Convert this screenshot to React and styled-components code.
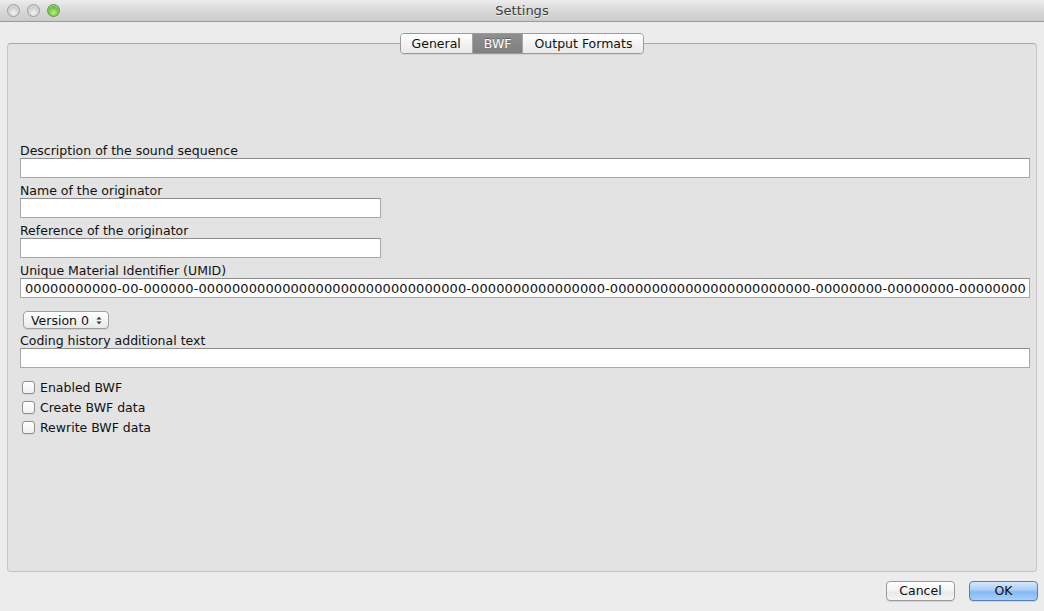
import React from 'react'
import styled, { createGlobalStyle } from 'styled-components'

const GlobalStyle = createGlobalStyle`
  html, body {
    margin: 0;
    padding: 0;
    background: #ececec;
  }
  body {
    font-family: "DejaVu Sans", "Liberation Sans", sans-serif;
    font-size: 12.5px;
    color: #111;
  }
`

const Window = styled.div`
  width: 1044px;
  height: 611px;
  display: flex;
  flex-direction: column;
  background: #ececec;
  overflow: hidden;
  border-radius: 5px 5px 4px 4px;
`

const TitleBar = styled.div`
  height: 21px;
  flex: none;
  display: flex;
  align-items: center;
  position: relative;
  background: linear-gradient(#ececec, #d6d6d6 60%, #cbcbcb);
  border-bottom: 1px solid #9a9a9a;
`

const Lights = styled.div`
  display: flex;
  gap: 7px;
  padding-left: 7px;
`

const Light = styled.span`
  width: 13px;
  height: 13px;
  border-radius: 50%;
  box-sizing: border-box;
  border: 1px solid ${p => (p.green ? '#5e9a3e' : '#9c9c9c')};
  background: ${p =>
    p.green
      ? 'radial-gradient(circle at 50% 70%, #b8f08c 0%, #6cc33a 55%, #3f8f1e 100%)'
      : 'radial-gradient(circle at 50% 70%, #f4f4f4 0%, #cfcfcf 55%, #a9a9a9 100%)'};
  box-shadow: inset 0 1px 1px rgba(255, 255, 255, 0.6);
`

const Title = styled.div`
  position: absolute;
  left: 0;
  right: 0;
  text-align: center;
  font-size: 13px;
  color: #3c3c3c;
  text-shadow: 0 1px 0 rgba(255, 255, 255, 0.6);
  pointer-events: none;
`

const Body = styled.div`
  flex: 1;
  display: flex;
  flex-direction: column;
  padding: 21px 7px 10px 7px;
`

const TabBox = styled.div`
  position: relative;
  flex: 1;
  background: #e3e3e3;
  border: 1px solid #c4c4c4;
  border-top-color: #a9a9a9;
  border-radius: 4px;
  padding: 96px 6px 0 12px;
`

const TabBar = styled.div`
  position: absolute;
  top: -11px;
  left: 0;
  right: 0;
  display: flex;
  justify-content: center;
`

const TabGroup = styled.div`
  display: flex;
  border: 1px solid #9b9b9b;
  border-radius: 4px;
  overflow: hidden;
  box-shadow: 0 1px 0 rgba(0, 0, 0, 0.08);
`

const Tab = styled.div`
  height: 19px;
  line-height: 19px;
  padding: 0 11px;
  color: ${p => (p.active ? '#fff' : '#111')};
  text-shadow: ${p => (p.active ? '0 -1px 0 rgba(0,0,0,0.35)' : 'none')};
  background: ${p =>
    p.active
      ? 'linear-gradient(#8f8f8f, #7f7f7f)'
      : 'linear-gradient(#ffffff, #f1f1f1 60%, #e9e9e9)'};
  & + & {
    border-left: 1px solid #a5a5a5;
  }
`

const Form = styled.div`
  display: flex;
  flex-direction: column;
`

const Label = styled.div`
  box-sizing: border-box;
  height: 18px;
  padding-top: 3px;
  line-height: 15px;
`

const Field = styled.div`
  box-sizing: border-box;
  width: ${p => p.width || '100%'};
  height: 20px;
  background: #fff;
  border: 1px solid #a8a8a8;
  border-top-color: #8e8e8e;
  margin-bottom: 2px;
`

const UmidField = styled(Field)`
  display: flex;
  justify-content: flex-end;
  align-items: center;
  white-space: nowrap;
  font-size: 13px;
  letter-spacing: 0.1px;
  padding: 0 3px 0 0;
`

const Popup = styled.div`
  display: flex;
  align-items: center;
  gap: 7px;
  align-self: flex-start;
  box-sizing: border-box;
  height: 18px;
  margin: 11px 0 1px 3px;
  padding: 0 6px 0 7px;
  border: 1px solid #9f9f9f;
  border-radius: 4px;
  background: linear-gradient(#ffffff, #f2f2f2 60%, #e8e8e8);
  box-shadow: 0 1px 0 rgba(0, 0, 0, 0.08);
`

const Checks = styled.div`
  display: flex;
  flex-direction: column;
  gap: 7px;
  margin-top: 11px;
  padding-left: 2px;
`

const CheckRow = styled.label`
  display: flex;
  align-items: center;
  gap: 5px;
  height: 13px;
`

const Box = styled.span`
  box-sizing: border-box;
  width: 13px;
  height: 13px;
  border: 1px solid #8f8f8f;
  border-radius: 3px;
  background: linear-gradient(#ffffff, #f0f0f0);
  box-shadow: 0 1px 0 rgba(0, 0, 0, 0.06);
`

const Footer = styled.div`
  display: flex;
  justify-content: flex-end;
  gap: 14px;
  padding-top: 9px;
  margin-right: -1px;
`

const Button = styled.div`
  box-sizing: border-box;
  width: 69px;
  height: 20px;
  line-height: 18px;
  text-align: center;
  border-radius: 4px;
  border: 1px solid ${p => (p.primary ? '#5a7db3' : '#9a9a9a')};
  background: ${p =>
    p.primary
      ? 'linear-gradient(#d7e8fc, #a9cdf6 45%, #86b8f1 55%, #a6d0fb)'
      : 'linear-gradient(#ffffff, #f3f3f3 50%, #e9e9e9 55%, #f4f4f4)'};
  box-shadow: 0 1px 0 rgba(0, 0, 0, 0.1);
`

const Arrows = () => (
  <svg width="6" height="9" viewBox="0 0 6 9">
    <path d="M0.5 3.5 L3 0.8 L5.5 3.5 Z" fill="#333" />
    <path d="M0.5 5.5 L3 8.2 L5.5 5.5 Z" fill="#333" />
  </svg>
)

const umid =
  '00000000000-00-000000-00000000000000000000000000000000-0000000000000000-000000000000000000000000-00000000-00000000-00000000'

const checks = ['Enabled BWF', 'Create BWF data', 'Rewrite BWF data']

export default function App() {
  return (
    <>
      <GlobalStyle />
      <Window>
        <TitleBar>
          <Lights>
            <Light />
            <Light />
            <Light green />
          </Lights>
          <Title>Settings</Title>
        </TitleBar>
        <Body>
          <TabBox>
            <TabBar>
              <TabGroup>
                <Tab>General</Tab>
                <Tab active>BWF</Tab>
                <Tab>Output Formats</Tab>
              </TabGroup>
            </TabBar>
            <Form>
              <Label>Description of the sound sequence</Label>
              <Field />
              <Label>Name of the originator</Label>
              <Field width="361px" />
              <Label>Reference of the originator</Label>
              <Field width="361px" />
              <Label>Unique Material Identifier (UMID)</Label>
              <UmidField>{umid}</UmidField>
              <Popup>
                Version 0 <Arrows />
              </Popup>
              <Label>Coding history additional text</Label>
              <Field />
              <Checks>
                {checks.map(c => (
                  <CheckRow key={c}>
                    <Box />
                    {c}
                  </CheckRow>
                ))}
              </Checks>
            </Form>
          </TabBox>
          <Footer>
            <Button>Cancel</Button>
            <Button primary>OK</Button>
          </Footer>
        </Body>
      </Window>
    </>
  )
}
